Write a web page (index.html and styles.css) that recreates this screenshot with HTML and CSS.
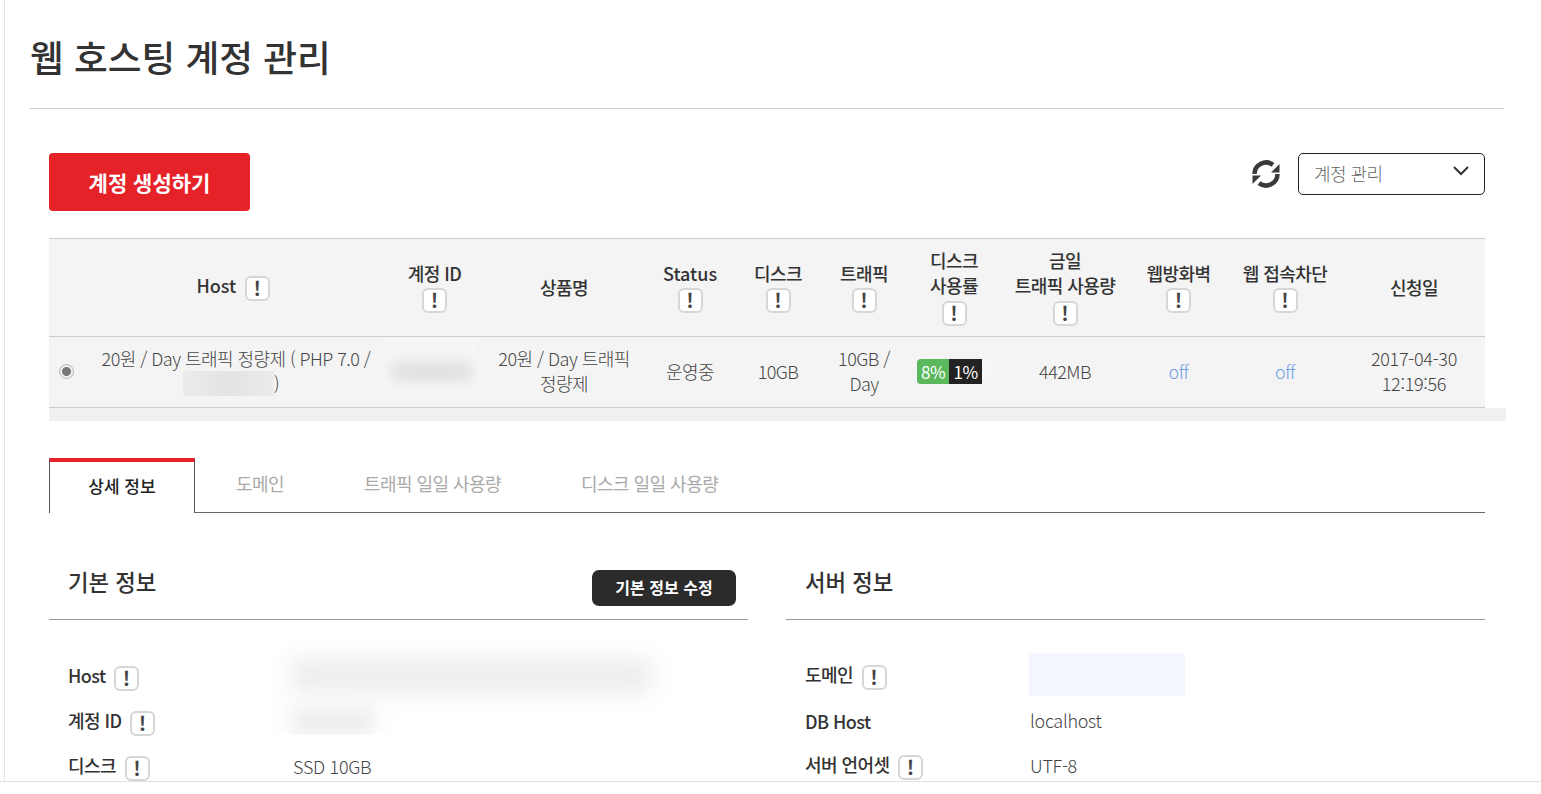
FILE: index.html
```html
<!DOCTYPE html>
<html lang="ko">
<head>
  <meta charset="UTF-8">
  <meta name="viewport" content="width=device-width, initial-scale=1.0">
  <title>웹 호스팅 계정 관리</title>
  <link rel="stylesheet" href="styles.css">
</head>
<body>
  <div class="window">
    <div class="page">
      <div class="page-title">
        <h1>웹 호스팅 계정 관리</h1>
      </div>

      <div class="content">
        <!-- Toolbar -->
        <div class="toolbar">
          <button class="create-button">계정 생성하기</button>
          <div class="toolbar-right">
            <svg class="refresh" viewBox="0 0 30 30">
              <path class="refresh-arc" d="M3.5 15A11.5 11.5 0 0 1 22 5.9"/>
              <path class="refresh-arc" d="M26.5 15A11.5 11.5 0 0 1 8 24.1"/>
              <path d="M28.5 5V13.5H20Z"/>
              <path d="M1.5 25V16.5H10Z"/>
            </svg>
            <div class="select-box">
              <span>계정 관리</span>
              <svg class="chevron" viewBox="0 0 16 10"><path d="M1 1l7 7 7-7"/></svg>
            </div>
          </div>
        </div>

        <!-- Account table -->
        <table class="account-table">
          <colgroup>
            <col class="c-radio"><col class="c-host"><col class="c-id"><col class="c-product">
            <col class="c-status"><col class="c-disk"><col class="c-traffic"><col class="c-usage">
            <col class="c-today"><col class="c-waf"><col class="c-block"><col class="c-date">
          </colgroup>
          <thead>
            <tr>
              <th></th>
              <th class="th-host"><span class="en">Host</span> <span class="info">!</span></th>
              <th class="th-id">계정 ID<br><span class="info">!</span></th>
              <th>상품명</th>
              <th><span class="en">Status</span><br><span class="info">!</span></th>
              <th>디스크<br><span class="info">!</span></th>
              <th>트래픽<br><span class="info">!</span></th>
              <th>디스크<br>사용률<br><span class="info">!</span></th>
              <th>금일<br>트래픽 사용량<br><span class="info">!</span></th>
              <th>웹방화벽<br><span class="info">!</span></th>
              <th>웹 접속차단<br><span class="info">!</span></th>
              <th>신청일</th>
            </tr>
          </thead>
          <tbody>
            <tr>
              <td><span class="radio"></span></td>
              <td class="host-cell">20원 / Day 트래픽 정량제 ( PHP 7.0 /<br><span class="hidden-host"></span>)</td>
              <td class="id-cell"><div class="hidden-id"><div class="smudge"></div></div></td>
              <td>20원 / Day 트래픽<br>정량제</td>
              <td>운영중</td>
              <td>10GB</td>
              <td>10GB /<br>Day</td>
              <td>
                <div class="progress"><span class="bar-green">8%</span><span class="bar-dark">1%</span></div>
              </td>
              <td>442MB</td>
              <td class="off">off</td>
              <td class="off">off</td>
              <td class="date-cell">2017-04-30<br>12:19:56</td>
            </tr>
          </tbody>
        </table>
        <div class="scroll-track"></div>

        <!-- Tabs -->
        <ul class="tabs">
          <li class="active">상세 정보</li>
          <li>도메인</li>
          <li>트래픽 일일 사용량</li>
          <li>디스크 일일 사용량</li>
        </ul>

        <!-- Detail -->
        <div class="detail">
          <section class="panel">
            <div class="panel-head">
              <h2>기본 정보</h2>
              <button class="edit-button">기본 정보 수정</button>
            </div>
            <div class="info-row">
              <div class="label">Host <span class="info">!</span></div>
              <div class="value"><div class="smudge smudge-host"></div></div>
            </div>
            <div class="info-row">
              <div class="label">계정 ID <span class="info">!</span></div>
              <div class="value"><div class="smudge smudge-id"></div></div>
            </div>
            <div class="info-row">
              <div class="label">디스크 <span class="info">!</span></div>
              <div class="value">SSD 10GB</div>
            </div>
          </section>

          <section class="panel panel-server">
            <div class="panel-head">
              <h2>서버 정보</h2>
            </div>
            <div class="info-row">
              <div class="label">도메인 <span class="info">!</span></div>
              <div class="value"><div class="hidden-domain"></div></div>
            </div>
            <div class="info-row">
              <div class="label">DB Host</div>
              <div class="value">localhost</div>
            </div>
            <div class="info-row">
              <div class="label">서버 언어셋 <span class="info">!</span></div>
              <div class="value">UTF-8</div>
            </div>
          </section>
        </div>
      </div>
    </div>
  </div>
</body>
</html>
```

FILE: styles.css
```css
/* General Reset */
* {
  margin: 0;
  padding: 0;
  box-sizing: border-box;
}

html, body {
  height: 100%;
  overflow: hidden;
}

body {
  font-family: "Noto Sans CJK KR", "Noto Sans", sans-serif;
  font-size: 18px;
  letter-spacing: -0.55px;
  font-weight: 300;
  color: #444;
  background-color: #fff;
}

.window {
  height: 782px;
  border-bottom: 1px solid #e2e2e2;
  overflow: hidden;
}

.page {
  height: 100%;
  margin-left: 4px;
  padding-left: 25px;
  border-left: 1px solid #e5e5e5;
}

/* Title */
.page-title {
  width: 1474px;
  height: 109px;
  padding-top: 29px;
  border-bottom: 1px solid #ccc;
}

.page-title h1 {
  font-size: 36.7px;
  letter-spacing: 0;
  line-height: 54px;
  font-weight: 500;
  color: #333;
}

.content {
  padding-left: 19px;
  width: 1455px;
}

/* Toolbar */
.toolbar {
  display: flex;
  justify-content: space-between;
  align-items: flex-start;
  padding-top: 44px;
  height: 129px;
}

.create-button {
  width: 201px;
  height: 58px;
  background-color: #e62229;
  color: #fff;
  border: none;
  border-radius: 4px;
  font-family: inherit;
  font-size: 21px;
  letter-spacing: 0;
  font-weight: 700;
}

.toolbar-right {
  display: flex;
  align-items: center;
  gap: 17px;
}

.refresh {
  width: 30px;
  height: 30px;
  fill: #3a3a3a;
}

.refresh-arc {
  fill: none;
  stroke: #3a3a3a;
  stroke-width: 4.5;
}

.select-box {
  display: flex;
  justify-content: space-between;
  align-items: center;
  width: 187px;
  height: 42px;
  padding: 0 15px 2px;
  border: 1px solid #222;
  border-radius: 5px;
  color: #666;
}

.chevron {
  width: 16px;
  height: 10px;
  margin-top: -4px;
  fill: none;
  stroke: #333;
  stroke-width: 2;
}

/* Table */
.account-table {
  width: 1436px;
  table-layout: fixed;
  border-collapse: collapse;
  background-color: #f4f4f4;
  text-align: center;
  line-height: 25px;
}

.c-radio { width: 35px; }
.c-host { width: 302px; }
.c-id { width: 91px; }
.c-product { width: 174px; }
.c-status { width: 78px; }
.c-disk { width: 98px; }
.c-traffic { width: 74px; }
.c-usage { width: 106px; }
.c-today { width: 116px; }
.c-waf { width: 111px; }
.c-block { width: 102px; }
.c-date { width: 149px; }

.account-table th {
  height: 98px;
  padding-bottom: 1px;
  border-top: 1px solid #ccc;
  border-bottom: 1px solid #ccc;
  font-weight: 500;
  color: #333;
}

.account-table td {
  height: 71px;
  padding-bottom: 2px;
  border-bottom: 1px solid #ccc;
}

.account-table th:last-child,
.account-table td:last-child {
  padding-left: 7px;
}

.account-table .th-id {
  padding-left: 6px;
}

.account-table .th-host {
  padding-right: 4px;
}

.en {
  letter-spacing: 0;
}

.th-host .info {
  margin-left: 4px;
}

.account-table .host-cell {
  padding-left: 2px;
}

.date-cell {
  letter-spacing: -0.3px;
}

.scroll-track {
  width: 1457px;
  height: 13px;
  background-color: #f0f0f0;
}

.info {
  display: inline-block;
  width: 25px;
  height: 25px;
  border: 2px solid #d6d6d6;
  border-radius: 6px;
  background-color: #fff;
  color: #444;
  font-size: 20px;
  letter-spacing: 0;
  font-weight: 700;
  line-height: 20px;
  text-align: center;
  vertical-align: middle;
}

.radio {
  display: block;
  width: 15px;
  height: 15px;
  margin: 0 0 0 10px;
  border: 1px solid #b5b5b5;
  border-radius: 50%;
  background: radial-gradient(circle, #777 0 4px, #eee 5px);
}

.hidden-host {
  display: inline-block;
  width: 91px;
  height: 25px;
  margin-left: -10px;
  vertical-align: bottom;
  background: linear-gradient(90deg, #ececec, #e3e3e3 50%, #ebebeb);
}

.account-table .id-cell {
  padding-bottom: 0;
  vertical-align: top;
}

.hidden-id {
  height: 57px;
  margin-top: -1px;
  padding: 28px 4px 0;
  background-color: #f6f6f6;
  overflow: hidden;
}

.smudge {
  height: 15px;
  background-color: #d8d8d8;
  border-radius: 8px;
  filter: blur(8px);
}

.progress {
  display: flex;
  width: 75px;
  height: 25px;
  margin-left: 16px;
  border-radius: 4px;
  background-color: #f6f6f6;
  overflow: hidden;
  color: #fff;
  font-size: 17px;
  letter-spacing: -0.5px;
  font-weight: 400;
}

.bar-green {
  width: 32px;
  background-color: #5cb85c;
}

.bar-dark {
  width: 33px;
  background-color: #222;
}

.off {
  color: #6c9ee8;
}

/* Tabs */
.tabs {
  display: flex;
  list-style: none;
  height: 55px;
  margin-top: 37px;
  border-bottom: 1px solid #666;
}

.tabs li {
  padding: 6px 40px 0;
  line-height: 38px;
  color: #aaa;
  font-weight: 400;
}

.tabs li.active {
  width: 146px;
  height: 55px;
  margin-right: 1px;
  padding: 4px 0 0;
  border-top: 4px solid #e62229;
  border-left: 1px solid #555;
  border-right: 1px solid #555;
  background-color: #fff;
  text-align: center;
  line-height: 40px;
  letter-spacing: 0;
  color: #222;
  font-size: 17px;
  font-weight: 500;
}

/* Detail panels */
.detail {
  display: flex;
  gap: 38px;
}

.panel {
  width: 699px;
}

.panel-head {
  display: flex;
  justify-content: space-between;
  align-items: flex-start;
  height: 107px;
  padding: 50px 12px 0 19px;
  border-bottom: 1px solid #999;
  margin-bottom: 34px;
}

.panel-server .panel-head {
  margin-bottom: 33px;
}

.panel-head h2 {
  font-size: 22.3px;
  letter-spacing: 0;
  line-height: 36px;
  font-weight: 500;
  color: #333;
}

.edit-button {
  width: 144px;
  height: 36px;
  margin-top: 7px;
  padding-bottom: 2px;
  background-color: #2b2b2b;
  color: #fff;
  border: none;
  border-radius: 7px;
  font-family: inherit;
  font-size: 16px;
  letter-spacing: 0;
  font-weight: 700;
}

.info-row {
  display: flex;
  align-items: center;
  height: 45px;
  padding-left: 19px;
}

.label {
  width: 225px;
  font-weight: 500;
  color: #333;
}

.label .info {
  margin-left: 4px;
}

.value {
  flex: 1;
  padding-bottom: 2px;
  letter-spacing: -0.3px;
}

.smudge-host {
  width: 362px;
  height: 36px;
  margin-left: -3px;
  background-color: #ededed;
  filter: blur(11px);
}

.smudge-id {
  width: 85px;
  height: 22px;
  margin-left: -3px;
  background-color: #e8e8e8;
  filter: blur(10px);
  clip-path: inset(-40px -40px -3px -40px);
}

.hidden-domain {
  width: 156px;
  height: 43px;
  margin-left: -1px;
  background-color: #f3f6fd;
}
```
